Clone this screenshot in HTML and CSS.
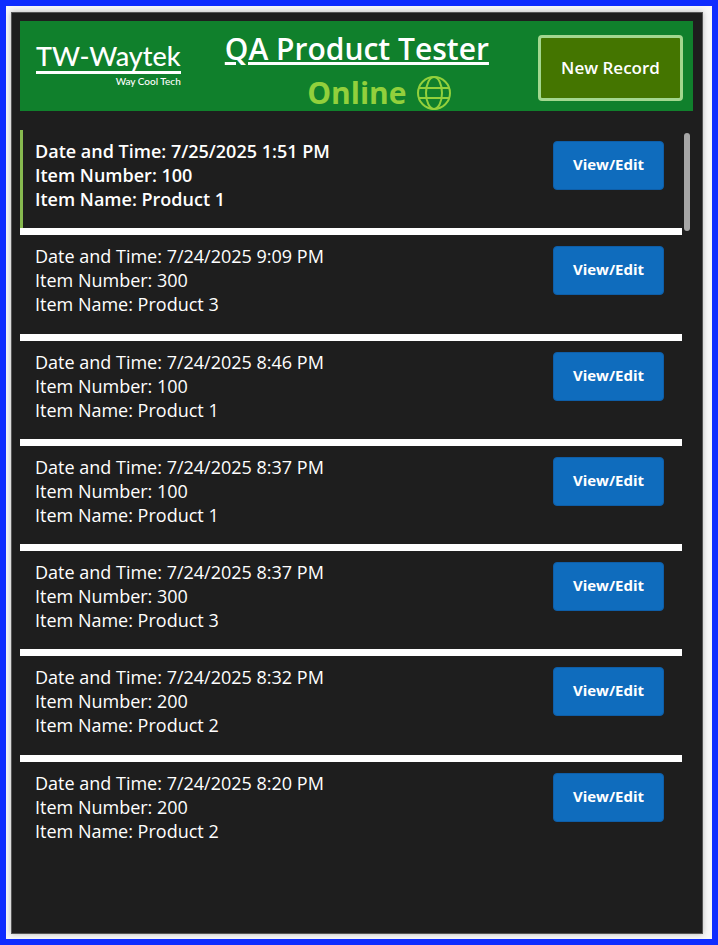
FILE: index.html
```html
<!DOCTYPE html>
<html lang="en">
<head>
    <meta charset="UTF-8">
    <meta name="viewport" content="width=device-width, initial-scale=1.0">
    <title>QA Product Tester</title>

    <link rel="stylesheet" href="styles.css">
</head>
<body>

    <div class="screen">

        <header class="header">
            <div class="logo">
                <div class="logo-name">TW-Waytek</div>
                <div class="logo-tag">Way Cool Tech</div>
            </div>

            <div class="heading">
                <h1 class="title">QA Product Tester</h1>
                <div class="status">
                    <span>Online</span>
                    <svg class="globe" viewBox="0 0 36 36" aria-hidden="true">
                        <circle cx="18" cy="18" r="16"/>
                        <ellipse cx="18" cy="18" rx="8" ry="16"/>
                        <path d="M3 13H33M3 23H33"/>
                    </svg>
                </div>
            </div>

            <button class="new-btn" type="button">New Record</button>
        </header>

        <main class="content">
            <ul class="list">
                <li class="record selected">
                    <div class="info">
                        <p>Date and Time: 7/25/2025 1:51 PM</p>
                        <p>Item Number: 100</p>
                        <p>Item Name: Product 1</p>
                    </div>
                    <button class="edit-btn" type="button">View/Edit</button>
                </li>
                <li class="record">
                    <div class="info">
                        <p>Date and Time: 7/24/2025 9:09 PM</p>
                        <p>Item Number: 300</p>
                        <p>Item Name: Product 3</p>
                    </div>
                    <button class="edit-btn" type="button">View/Edit</button>
                </li>
                <li class="record">
                    <div class="info">
                        <p>Date and Time: 7/24/2025 8:46 PM</p>
                        <p>Item Number: 100</p>
                        <p>Item Name: Product 1</p>
                    </div>
                    <button class="edit-btn" type="button">View/Edit</button>
                </li>
                <li class="record">
                    <div class="info">
                        <p>Date and Time: 7/24/2025 8:37 PM</p>
                        <p>Item Number: 100</p>
                        <p>Item Name: Product 1</p>
                    </div>
                    <button class="edit-btn" type="button">View/Edit</button>
                </li>
                <li class="record">
                    <div class="info">
                        <p>Date and Time: 7/24/2025 8:37 PM</p>
                        <p>Item Number: 300</p>
                        <p>Item Name: Product 3</p>
                    </div>
                    <button class="edit-btn" type="button">View/Edit</button>
                </li>
                <li class="record">
                    <div class="info">
                        <p>Date and Time: 7/24/2025 8:32 PM</p>
                        <p>Item Number: 200</p>
                        <p>Item Name: Product 2</p>
                    </div>
                    <button class="edit-btn" type="button">View/Edit</button>
                </li>
                <li class="record">
                    <div class="info">
                        <p>Date and Time: 7/24/2025 8:20 PM</p>
                        <p>Item Number: 200</p>
                        <p>Item Name: Product 2</p>
                    </div>
                    <button class="edit-btn" type="button">View/Edit</button>
                </li>
            </ul>
            <div class="scroll"></div>
        </main>

    </div>

</body>
</html>
```
FILE: styles.css
```css
*{
    box-sizing: border-box;
}

body,h1,p,ul{
    margin: 0;
    padding: 0;
}

/* page frame */
body{
    min-height: 100vh;
    display: flex;
    padding: 6px 9px 5px 5px;
    border: 6px solid #0f2dff;
    background-color: #f8f8f8;
    color: white;
    font-family: "Open Sans", "Noto Sans", sans-serif;
}

.screen{
    flex: 1;
    display: flex;
    flex-direction: column;
    padding: 8px 9px 8px 8px;
    border: 1px solid #555;
    background-color: #1e1e1e;
    box-shadow: 0 0 6px rgba(0,0,0,0.25);
}

/* header */
.header{
    display: flex;
    align-items: center;
    justify-content: space-between;
    height: 90px;
    padding: 3px 10px 0 16px;
    background-color: #10802c;
}

.logo{
    padding-bottom: 6px;
    font-family: Lato, sans-serif;
    font-weight: 500;
    text-align: right;
}
.logo-name{
    font-size: 27px;
    line-height: 30px;
    border-bottom: 3px solid white;
}
.logo-tag{
    font-size: 10px;
    line-height: 14px;
}

.heading{
    padding: 6px 5px 0 0;
    text-align: center;
}
.title{
    font-size: 30px;
    line-height: 44px;
    font-weight: 600;
    text-decoration: underline;
}
.status{
    display: flex;
    align-items: center;
    justify-content: center;
    gap: 9px;
    padding-left: 45px;
    color: #92d03c;
    font-size: 30px;
    line-height: 44px;
    font-weight: 700;
}
.globe{
    width: 36px;
    height: 36px;
    fill: none;
    stroke: #92d03c;
    stroke-width: 2;
}

/* buttons */
.new-btn{
    width: 145px;
    height: 66px;
    padding: 0;
    border: 3px solid #a3d78f;
    border-radius: 4px;
    background-color: #447500;
    color: white;
    font-family: inherit;
    font-size: 17px;
    font-weight: 600;
}
.edit-btn{
    width: 111px;
    height: 49px;
    margin-top: 2px;
    padding: 0 0 3px;
    border: 1px solid #0e5ea8;
    border-radius: 4px;
    background-color: #0f6cbd;
    color: white;
    font-family: inherit;
    font-size: 15px;
    font-weight: 700;
}

/* records */
.content{
    flex: 1;
    display: flex;
    gap: 2px;
    padding: 19px 3px 58px 0;
}
.list{
    flex: 1;
    display: grid;
    grid-auto-rows: 1fr;
    list-style: none;
}
.record{
    display: flex;
    align-items: flex-start;
    justify-content: space-between;
    padding: 9px 18px 0 15px;
    background: linear-gradient(white,white) left bottom / 100% 7px no-repeat;
}
.record:last-child{
    background: none;
}
/* green bar stays above the white divider */
.selected{
    background:
        linear-gradient(white,white) left bottom / 100% 7px no-repeat,
        linear-gradient(#87b94f,#87b94f) left top / 3px 100% no-repeat;
    font-weight: 600;
}
.info{
    font-size: 18px;
    line-height: 24px;
}

.scroll{
    width: 6px;
    height: 98px;
    margin-top: 3px;
    border-radius: 3px;
    background-color: #a6a6a6;
}
```
